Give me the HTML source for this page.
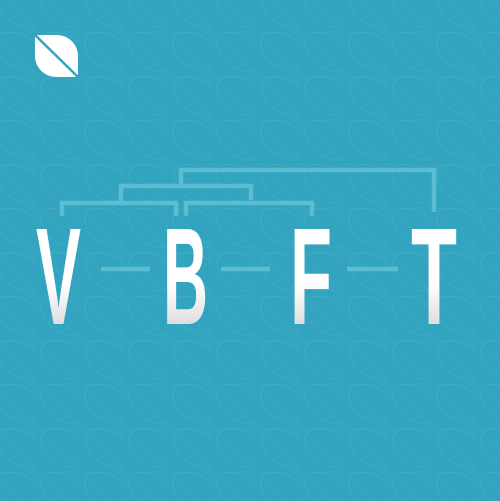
<!DOCTYPE html>
<html><head><style>
html,body{margin:0;padding:0;background:#33a4bf;}
svg{display:block}
</style></head><body>
<svg width="500" height="501" viewBox="0 0 500 501" xmlns="http://www.w3.org/2000/svg">
<defs>
<pattern id="p" x="-10" y="-12" width="44" height="44" patternUnits="userSpaceOnUse">
<path d="M0 0H44M0 0V44" stroke="#4db2c9" stroke-width="1" fill="none" opacity="0.4"/>
<path d="M8 4C20 -4 40 4 44 10M8 4L44 40M8 4C2 20 20 40 44 40" stroke="#52b5cb" stroke-width="1" fill="none" opacity="0.35"/>
</pattern>
<linearGradient id="g" x1="0" y1="0" x2="0" y2="1">
<stop offset="0" stop-color="#ffffff"/><stop offset="0.55" stop-color="#ffffff"/><stop offset="1" stop-color="#c4c4c4"/>
</linearGradient>
</defs>
<rect width="500" height="501" fill="#33a4bf"/>
<rect width="500" height="501" fill="url(#p)"/>
<path d="M35 35 L57 35 A21 21 0 0 1 78 56 L78 77 L56 77 A21 21 0 0 1 35 56 Z" fill="#fff"/>
<path d="M33 33 L80 79" stroke="#33a4bf" stroke-width="2.5"/>
<g fill="none" stroke="#5cbdd0" stroke-width="4.5">
<path d="M181 186V170H434V212"/>
<path d="M121 202V186H251V200"/>
<path d="M62 216V203H176V216"/>
<path d="M186 216V203H312V216"/>
<path d="M101 269H150M221 269H270M347 269H398"/>
</g>
<g font-family="Liberation Sans, sans-serif" font-weight="bold" font-size="138" fill="url(#g)">
<text x="36" y="324" textLength="45" lengthAdjust="spacingAndGlyphs">V</text>
<text x="163" y="324" textLength="45" lengthAdjust="spacingAndGlyphs">B</text>
<text x="290" y="324" textLength="42" lengthAdjust="spacingAndGlyphs">F</text>
<text x="411" y="324" textLength="46" lengthAdjust="spacingAndGlyphs">T</text>
</g>
</svg>
</body></html>
